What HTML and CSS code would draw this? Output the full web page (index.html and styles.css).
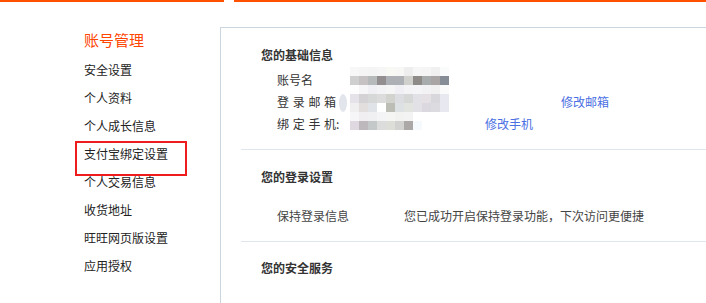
FILE: index.html
```html
<!DOCTYPE html>
<html lang="zh-CN">
<head>
<meta charset="utf-8">
<title>账号管理</title>
<link rel="stylesheet" href="styles.css">
</head>
<body>
<div class="topbar">
  <span class="topbar-left"></span>
  <span class="topbar-gap"></span>
  <span class="topbar-right"></span>
</div>
<div class="page">
  <aside class="sidebar">
    <h2 class="side-title">账号管理</h2>
    <ul class="side-menu">
      <li>安全设置</li>
      <li>个人资料</li>
      <li>个人成长信息</li>
      <li class="marked">支付宝绑定设置</li>
      <li>个人交易信息</li>
      <li>收货地址</li>
      <li>旺旺网页版设置</li>
      <li>应用授权</li>
    </ul>
  </aside>
  <main class="content">
    <section class="block">
      <h3 class="block-title">您的基础信息</h3>
      <div class="rows">
        <div class="row">
          <span class="label">账号名</span>
          <span class="mosaic mosaic-name"></span>
        </div>
        <div class="row">
          <span class="label">登 录 邮 箱</span>
          <span class="mosaic mosaic-mail"></span>
          <a class="link link-mail">修改邮箱</a>
        </div>
        <div class="row">
          <span class="label">绑 定 手 机:</span>
          <span class="mosaic mosaic-phone"></span>
          <a class="link link-phone">修改手机</a>
        </div>
      </div>
    </section>
    <section class="block">
      <h3 class="block-title">您的登录设置</h3>
      <div class="rows rows-login">
        <div class="row">
          <span class="label label-wide">保持登录信息</span>
          <span class="value">您已成功开启保持登录功能，下次访问更便捷</span>
        </div>
      </div>
    </section>
    <section class="block block-last">
      <h3 class="block-title">您的安全服务</h3>
    </section>
  </main>
</div>
</body>
</html>
```
FILE: styles.css
```css
* { box-sizing: border-box; }
html, body {
  margin: 0;
  padding: 0;
  background: #fff;
  width: 706px;
  height: 303px;
  overflow: hidden;
  font-family: "Noto Sans CJK SC", "Noto Sans", sans-serif;
  font-size: 12px;
  color: #3c3c3c;
}

.topbar {
  display: flex;
  height: 2px;
}
.topbar-left { width: 224px; background: #ff5000; }
.topbar-gap { width: 10px; }
.topbar-right { flex: 1; background: #ff5000; }

.page {
  display: flex;
  height: 301px;
}

.sidebar {
  width: 220px;
  flex: none;
  padding: 28px 0 0 84px;
}
.side-title {
  margin: 0 0 6px;
  font-size: 15px;
  line-height: 20px;
  font-weight: normal;
  color: #ff4400;
}
.side-menu {
  list-style: none;
  margin: 0;
  padding: 0;
}
.side-menu li {
  height: 28px;
  line-height: 28px;
  font-size: 12px;
  color: #222;
  white-space: nowrap;
}
.side-menu li.marked { position: relative; }
.side-menu li.marked::after {
  content: "";
  position: absolute;
  left: -9px;
  top: 1px;
  width: 108px;
  height: 31px;
  border: 2px solid #ee1c1c;
}

.content {
  flex: 1;
  margin-top: 25px;
  border-top: 1px solid #cbd5de;
  border-left: 1px solid #cbd5de;
}

.block {
  margin-left: 20px;
  padding: 17px 0 14px;
  border-bottom: 1px solid #dfe5ec;
}
.block-last { border-bottom: none; padding-top: 16px; }
.block-title {
  margin: 0;
  padding-left: 20px;
  font-size: 12px;
  line-height: 20px;
  font-weight: bold;
  color: #333;
}

.rows {
  margin-top: 4px;
  padding-left: 36px;
}
.rows-login { margin-top: 18px; }
.row {
  display: flex;
  align-items: flex-start;
  height: 22px;
  line-height: 22px;
  white-space: nowrap;
}
.label {
  width: 73px;
  flex: none;
  color: #333;
  word-spacing: 1px;
}
.label-wide { width: 127px; color: #444; }
.value { color: #444; }

.mosaic {
  flex: none;
  display: block;
  width: 99px;
  position: relative;
}
.mosaic-name {
  margin-top: -2px;
  height: 18px;
  background:
    linear-gradient(90deg, #f7f7f7 0 9px, #f5f5f5 9px 18px, #f4f4f4 18px 27px, #f6f6f6 27px 36px, #f8f8f5 36px 45px, #f7f7f5 45px 54px, #eeeeee 54px 63px, #f6f6f6 63px 72px, #f5f5f5 72px 81px, #f0f0f0 81px 90px, #fafcfc 90px 99px) top / 99px 9px no-repeat,
    linear-gradient(90deg, #d0cfd0 0 9px, #c6c1c3 9px 18px, #b6baba 18px 27px, #938f90 27px 36px, #adb0b4 36px 45px, #adb0b5 45px 54px, #d0d0cc 54px 63px, #8e8b89 63px 72px, #a9acad 72px 81px, #aaa5a5 81px 90px, #878d96 90px 99px) bottom / 99px 9px no-repeat;
}
.mosaic-mail {
  margin-top: -6px;
  height: 27px;
  background:
    linear-gradient(90deg, #fdfdfd 0 9px, #f6f6f8 9px 18px, #f0f0f4 18px 27px, #f3f3f5 27px 36px, #f5f5f5 36px 45px, #f0f0f4 45px 54px, #f4f4f6 54px 63px, #f5f5f8 63px 72px, #f2f2f4 72px 81px, #f0f0f0 81px 90px, #fafafa 90px 99px) 0 0 / 99px 9px no-repeat,
    linear-gradient(90deg, #e6e2ea 0 9px, #d4d2d4 9px 18px, #d6d8d8 18px 27px, #dcdcdc 27px 36px, #d2d2ce 36px 45px, #dbdde0 45px 54px, #d6d8d8 54px 63px, #e2e2e6 63px 72px, #e4e0e4 72px 81px, #d8d8dc 81px 90px, #e8e8f0 90px 99px) 0 9px / 99px 9px no-repeat,
    linear-gradient(90deg, #efefef 0 9px, #e2dede 9px 18px, #e0e4e8 18px 27px, #ffffff 27px 36px, #bcbeb6 36px 45px, #dee1e4 45px 54px, #e2e4e0 54px 63px, #e2e2e6 63px 72px, #dcd8e0 72px 81px, #dcdce0 81px 90px, #e8e8f0 90px 99px) 0 18px / 99px 9px no-repeat;
}
.mosaic-mail::before {
  content: "";
  position: absolute;
  left: -11px;
  top: 9px;
  width: 8px;
  height: 18px;
  border-radius: 50%;
  background: #e2e5ec;
  clip-path: inset(0 0 0 0);
}
.mosaic-phone {
  width: 72px;
  margin-top: -1px;
  height: 18px;
  background:
    linear-gradient(90deg, #f6f6f8 0 9px, #f0eef0 9px 18px, #f0f0f2 18px 27px, #f4f4f6 27px 36px, #f5f5f3 36px 45px, #f2f2f0 45px 54px, #f3f3f3 54px 63px, #ffffff 63px 72px) top / 72px 9px no-repeat,
    linear-gradient(90deg, #e0d8e0 0 9px, #bcb8bc 9px 18px, #c4c8c8 18px 27px, #dcdcdc 27px 36px, #deded8 36px 45px, #d2d2d0 45px 54px, #aca8a8 54px 63px, #f6fafc 63px 72px) bottom / 72px 9px no-repeat;
}

.link {
  color: #4a6fe3;
  text-decoration: none;
  cursor: pointer;
}
.link-mail { margin-left: 112px; }
.link-phone { margin-left: 63px; }
```
